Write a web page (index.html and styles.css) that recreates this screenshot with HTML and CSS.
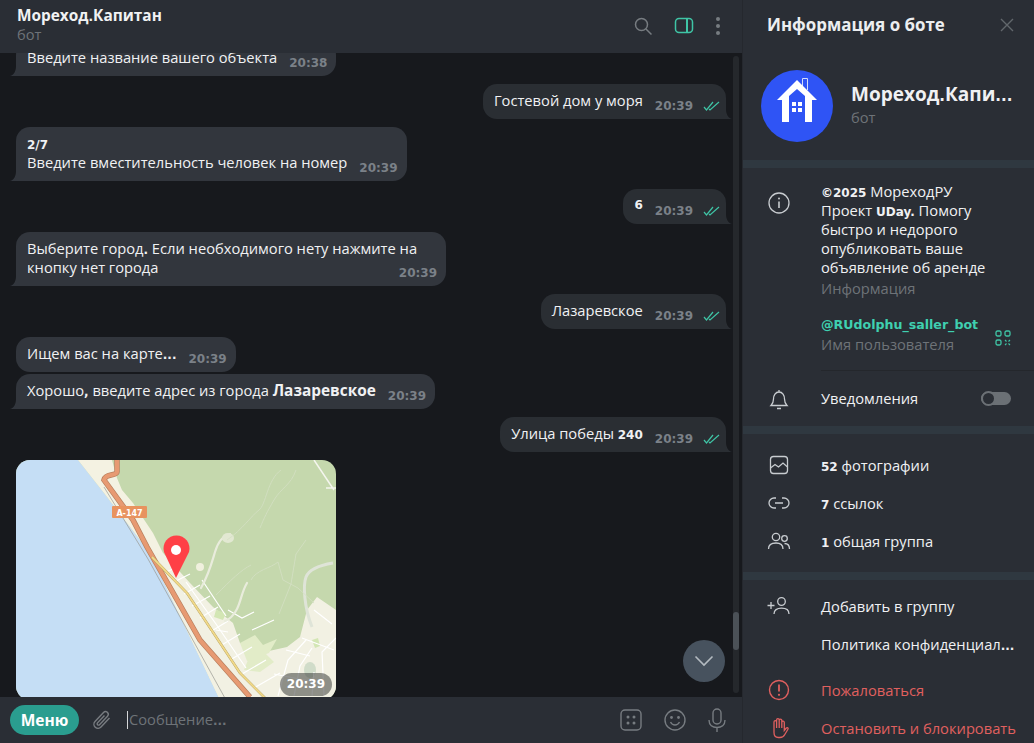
FILE: index.html
```html
<!DOCTYPE html>
<html lang="ru">
<head>
    <meta charset="UTF-8">
    <title>Мореход.Капитан</title>
    <link rel="stylesheet" href="styles.css">
</head>
<body>
<div class="app">
    <div class="chat">
        <div class="topbar">
            <div>
                <div class="chat-name">Мореход<b class="p">.</b>Капитан</div>
                <div class="chat-sub">бот</div>
            </div>
            <div class="top-icons">
                <svg width="20" height="20" viewBox="0 0 20 20" fill="none" stroke="#777c81" stroke-width="1.5"><circle cx="8.5" cy="8.5" r="6"/><path d="M13 13l5.5 5.5"/></svg>
                <svg width="20" height="20" viewBox="0 0 20 20" fill="none" stroke="#3fc5a6" stroke-width="1.5"><rect x="1.5" y="2.5" width="17" height="14" rx="3.5"/><path d="M13 2.5v14" stroke-width="2"/></svg>
                <svg width="6" height="20" viewBox="0 0 6 20" fill="#777c81"><circle cx="3" cy="3" r="2"/><circle cx="3" cy="10" r="2"/><circle cx="3" cy="17" r="2"/></svg>
            </div>
        </div>

        <div class="feed">
            <div class="messages">
                <div class="msg in tail">
                    <div class="line"><span>Введите название вашего объекта</span><span class="time">20:38</span></div>
                </div>
                <div class="msg out tail">
                    <div class="line"><span>Гостевой дом у моря</span><span class="time">20:39</span><svg class="ticks" viewBox="0 0 18 10" fill="none" stroke="#3fc5a6" stroke-width="1.2"><path d="M1 6l2.5 3L10 1M6 8l1 1 9-8"/></svg></div>
                </div>
                <div class="msg in tail">
                    <div class="num-line"><b class="num">2/7</b></div>
                    <div class="line"><span>Введите вместительность человек на номер</span><span class="time">20:39</span></div>
                </div>
                <div class="msg out tail">
                    <div class="line"><span class="num">6</span><span class="time">20:39</span><svg class="ticks" viewBox="0 0 18 10" fill="none" stroke="#3fc5a6" stroke-width="1.2"><path d="M1 6l2.5 3L10 1M6 8l1 1 9-8"/></svg></div>
                </div>
                <div class="msg in tail msg-wide">
                    <div>Выберите город<b class="p">.</b> Если необходимого нету нажмите на</div>
                    <div class="line split"><span>кнопку нет города</span><span class="time">20:39</span></div>
                </div>
                <div class="msg out tail">
                    <div class="line"><span>Лазаревское</span><span class="time">20:39</span><svg class="ticks" viewBox="0 0 18 10" fill="none" stroke="#3fc5a6" stroke-width="1.2"><path d="M1 6l2.5 3L10 1M6 8l1 1 9-8"/></svg></div>
                </div>
                <div class="msg in">
                    <div class="line"><span>Ищем вас на карте<b class="p">...</b></span><span class="time">20:39</span></div>
                </div>
                <div class="msg in tail close">
                    <div class="line"><span>Хорошо<b class="p">,</b> введите адрес из города <b class="strong">Лазаревское</b></span><span class="time">20:39</span></div>
                </div>
                <div class="msg out tail">
                    <div class="line"><span>Улица победы <b class="num">240</b></span><span class="time">20:39</span><svg class="ticks" viewBox="0 0 18 10" fill="none" stroke="#3fc5a6" stroke-width="1.2"><path d="M1 6l2.5 3L10 1M6 8l1 1 9-8"/></svg></div>
                </div>
                <div class="map">
                    <svg width="320" height="240" viewBox="0 0 320 240">
                        <rect width="320" height="240" fill="#c5d8ad"/>
                        <path d="M62 0L88 33 134 93 204 240H0V0Z" fill="#c5def5"/>
                        <path d="M62 0L88 33 134 93 204 240H224L174 140 147 93 137 73 117 43 106 30 101 18 96 0Z" fill="#f4f2e2"/>
                        <path d="M147 93L174 123 197 147 217 163 224 183 244 193 271 187 284 177 291 150 301 137 320 150V240H204L134 93Z" fill="#f2f1e3"/>
                        <path d="M224 183l15-8 8 10 14-6-8 14-22 8ZM232 200l18-6 8 8-14 10-16-2Z" fill="#e2ecc8"/>
                        <path d="M296 180l6-2 2 8-5 2ZM200 150l10 3-3 7-9-3Z" fill="#d3e6b4"/>
                        <ellipse cx="294" cy="210" rx="6" ry="8" fill="#d0dcc9"/>
                        <g fill="none" stroke="#fff" stroke-width="1.2">
                            <path d="M150 112l14-6M158 122l16-8M168 134l16-9M176 146l18-10M184 158l18-11M194 172l18-11M204 186l20-12M214 200l22-13M226 214l24-14M238 228l26-15"/>
                            <path d="M170 122l30 42 30 44M186 120l24 36M262 236l10-36 18-20M278 236l6-30 12-18M296 236l2-24M308 236l-2-44 14-14M270 190l24 6M258 214l40 8M286 178l32 12M298 150l18 14"/>
                            <path d="M200 170l12 2M212 150l14 8 12-6M236 170l22-10"/>
                        </g>
                        <g fill="none" stroke="#e9ecdc" stroke-width="2.2" stroke-linecap="round">
                            <path d="M214 74c-8 2-12 8-15 18s-6 22-14 36"/>
                            <path d="M231 123c-5 8-6 18-10 26s-8 10-12 12"/>
                        </g>
                        <path d="M317 103c-12 2-24 6-27 14s-2 30 6 50" fill="none" stroke="#dfe4d8" stroke-width="3"/>
                        <circle cx="184" cy="107" r="4" fill="#f0f0de"/>
                        <ellipse cx="212" cy="78" rx="6" ry="5" fill="#e2e8d2"/>
                        <g fill="none" stroke="#d4e0c4" stroke-width=".8">
                            <path d="M211 80c15-10 25-25 32-30s8-30 22-40M280 10c-5 15-15 18-22 30s-10 18-14 28M235 120c5-10 20-12 27-18l5 18 15 8 16 15M200 135c15-15 25-25 35-30M290 80l-10 14-5 30-12 30"/>
                        </g>
                        <path d="M298 0l20 30M310 28h10" fill="none" stroke="#f4f5ee" stroke-width="1.5"/>
                        <path d="M88 27l44 72 78 141" fill="none" stroke="#9a9a92" stroke-width=".7"/>
                        <path d="M101 0v12q0 2-6 3t-7 5l29 40 14 27 53 93 50 57" fill="none" stroke="#b9805f" stroke-width="5.5"/>
                        <path d="M101 0v12q0 2-6 3t-7 5l29 40 14 27 53 93 50 57" fill="none" stroke="#e79a72" stroke-width="4"/>
                        <path d="M136 97l35 36 53 80 27 27" fill="none" stroke="#b7a563" stroke-width="2.6"/>
                        <path d="M136 97l35 36 53 80 27 27" fill="none" stroke="#f1d98a" stroke-width="1.8"/>
                        <rect x="96" y="46" width="35" height="12" rx="1" fill="#e8935f"/>
                        <text x="113.500" y="55.500" class="road-label" text-anchor="middle">А-147</text>
                        <path d="M160 118L148 92a13 13 0 1 1 25 0Z" fill="#ff4046"/>
                        <circle cx="160" cy="90" r="5" fill="#fff"/>
                    </svg>
                    <span class="map-time">20:39</span>
                </div>
            </div>
            <div class="scroll-track"><div class="scroll-thumb"></div></div>
            <div class="down-btn">
                <svg width="20" height="12" viewBox="0 0 20 12" fill="none" stroke="#b4bbc1" stroke-width="1.6"><path d="M1.500 1.500L10 10l8.500-8.500"/></svg>
            </div>
        </div>

        <div class="composer">
            <div class="menu-btn">Меню</div>
            <svg class="clip" width="22" height="22" viewBox="0 0 20 22" fill="none" stroke="#787c81" stroke-width="1.4"><path d="M17.500 9l-8.500 9a4 4 0 0 1-6-5.500L11.500 3.500a2.700 2.700 0 0 1 4 3.700l-8 8.500a1.300 1.300 0 0 1-2-1.800l7-7.500"/></svg>
            <div class="input"><i class="caret"></i><span>Сообщение<b class="p">...</b></span></div>
            <div class="input-icons">
                <svg width="22" height="22" viewBox="0 0 22 22" fill="none" stroke="#777c81" stroke-width="1.4"><rect x="1" y="1" width="20" height="20" rx="4"/><g fill="#777c81" stroke="none"><circle cx="8" cy="8" r="1.500"/><circle cx="14" cy="8" r="1.500"/><circle cx="8" cy="14" r="1.500"/><circle cx="14" cy="14" r="1.500"/></g></svg>
                <svg width="22" height="22" viewBox="0 0 22 22" fill="none" stroke="#777c81" stroke-width="1.4"><circle cx="11" cy="11" r="10"/><path d="M6.500 13c1 2 2.700 3 4.500 3s3.500-1 4.500-3"/><g fill="#777c81" stroke="none"><circle cx="7.500" cy="8.500" r="1.400"/><circle cx="14.500" cy="8.500" r="1.400"/></g></svg>
                <svg width="18" height="24" viewBox="0 0 18 24" fill="none" stroke="#777c81" stroke-width="1.4"><rect x="5" y="1" width="8" height="15" rx="4"/><path d="M1 12c0 5 3.500 7.500 8 7.500s8-2.500 8-7.500M9 19.500V24"/></svg>
            </div>
        </div>
    </div>

    <div class="panel">
        <div class="panel-head">
            <span>Информация о боте</span>
            <svg width="14" height="14" viewBox="0 0 14 14" stroke="#62676c" stroke-width="1.4"><path d="M1 1l12 12M13 1L1 13"/></svg>
        </div>
        <div class="profile">
            <svg class="avatar" width="72" height="72" viewBox="0 0 72 72">
                <circle cx="36" cy="36" r="36" fill="#2f54f5"/>
                <path d="M41.500 20V8.500h5V20" fill="none" stroke="#d5dcfb"/>
                <path d="M36 10L56 30H51V52H44V26L36 19 28 26V52H21V30H16Z" fill="#fff"/>
                <g fill="#fff"><rect x="31" y="32" width="4" height="4"/><rect x="37" y="32" width="4" height="4"/><rect x="31" y="38" width="4" height="4"/><rect x="37" y="38" width="4" height="4"/></g>
            </svg>
            <div>
                <div class="profile-name">Мореход<b class="p">.</b>Капи<b class="p">...</b></div>
                <div class="muted">бот</div>
            </div>
        </div>
        <div class="divider"></div>

        <div class="section info">
            <div class="info-row">
                <svg class="ic" width="24" height="24" viewBox="0 0 24 24" fill="none" stroke="#c8ccd0" stroke-width="1.3"><circle cx="12" cy="12" r="10"/><path d="M12 10.500v6.500" stroke-width="1.600"/><circle cx="12" cy="7.500" r="1" fill="#c8ccd0" stroke="none"/></svg>
                <div>
                    <div class="about"><b class="num">©2025</b> МореходРУ Проект <b class="num">UDay.</b> Помогу быстро и недорого опубликовать ваше объявление об аренде</div>
                    <div class="muted about-label">Информация</div>
                </div>
            </div>
            <div class="user-row">
                <div>
                    <div class="username">@RUdolphu_saller_bot</div>
                    <div class="muted">Имя пользователя</div>
                </div>
                <svg width="16" height="16" viewBox="0 0 16 16" fill="none" stroke="#3fc5a6" stroke-width="1.3"><rect x="1" y="1" width="5" height="5" rx="1.500"/><rect x="10" y="1" width="5" height="5" rx="1.500"/><rect x="1" y="10" width="5" height="5" rx="1.500"/><path d="M10 10l1.500 1.500M15 10l-1.500 1.500M10 15l1.500-1.500M15 15l-1.500-1.500" stroke-width="1.100"/></svg>
            </div>
            <div class="hr"></div>
            <div class="row notify">
                <svg class="ic" width="24" height="24" viewBox="0 0 24 24" fill="none" stroke="#c8ccd0" stroke-width="1.3"><path d="M4 18.500c1.500-1.500 2.500-3 2.500-6.500S8.500 5 12 5s5.500 3.500 5.500 7 1 5 2.500 6.500ZM12 3v2M10 21.500h4"/></svg>
                <span>Уведомления</span>
                <div class="toggle"><i></i></div>
            </div>
        </div>
        <div class="divider"></div>

        <div class="section stats">
            <div class="row">
                <svg class="ic" width="24" height="24" viewBox="0 0 24 24" fill="none" stroke="#c8ccd0" stroke-width="1.3"><rect x="3.500" y="3.500" width="17" height="17" rx="3"/><path d="M3.500 15l4.500-3.500 3.500 2.500 4.500-4 4.500 4"/></svg>
                <span><b class="num">52</b> фотографии</span>
            </div>
            <div class="row">
                <svg class="ic" width="24" height="24" viewBox="0 0 24 24" fill="none" stroke="#c8ccd0" stroke-width="1.3"><path d="M9 7H7a5 5 0 0 0 0 10h2M15 7h2a5 5 0 0 1 0 10h-2M8 12h8"/></svg>
                <span><b class="num">7</b> ссылок</span>
            </div>
            <div class="row">
                <svg class="ic" width="24" height="24" viewBox="0 0 24 24" fill="none" stroke="#c8ccd0" stroke-width="1.3"><circle cx="9" cy="8" r="3.700"/><path d="M1.500 20c0-4 3-6 7.500-6s7 2 7 6"/><circle cx="17.500" cy="9.500" r="2.800"/><path d="M17.500 14.500c3 0 5 1.800 5 5.500"/></svg>
                <span><b class="num">1</b> общая группа</span>
            </div>
        </div>
        <div class="divider"></div>

        <div class="section actions">
            <div class="row">
                <svg class="ic" width="24" height="24" viewBox="0 0 24 24" fill="none" stroke="#c8ccd0" stroke-width="1.3"><circle cx="14.500" cy="7.500" r="3.800"/><path d="M7 20c0-4 3-5.800 7.500-5.800S22 16 22 20M0.500 11.500h7M4 8v7"/></svg>
                <span>Добавить в группу</span>
            </div>
            <div class="row">
                <span class="ic"></span>
                <span>Политика конфиденциал<b class="p">...</b></span>
            </div>
            <div class="row red first-red">
                <svg class="ic" width="24" height="24" viewBox="0 0 24 24" fill="none" stroke="#e0605f" stroke-width="1.4"><circle cx="12" cy="12" r="9.500"/><path d="M12 6.500v7" stroke-width="1.800"/><circle cx="12" cy="16.800" r="1.100" fill="#e0605f" stroke="none"/></svg>
                <span>Пожаловаться</span>
            </div>
            <div class="row red">
                <svg class="ic" width="24" height="24" viewBox="0 0 24 24" fill="none" stroke="#e0605f" stroke-width="1.3"><path d="M7 12.500V6a1.300 1.300 0 0 1 2.600 0V4a1.300 1.300 0 0 1 2.600 0v.500a1.300 1.300 0 0 1 2.600 0V6a1.300 1.300 0 0 1 2.500.500v8l2-2.500c1-1 2.500 0 1.500 1.500l-3 5c-1 2-2.500 3-5 3h-1.500c-3 0-4.300-2-4.300-5ZM9.600 6v6M12.200 4.500V12M14.800 6v6"/></svg>
                <span>Остановить и блокировать</span>
            </div>
        </div>
    </div>
</div>
</body>
</html>
```

FILE: styles.css
```css
* {
    box-sizing: border-box;
}

html,
body {
    margin: 0;
    height: 100%;
    overflow: hidden;
}

body {
    background: #17191d;
    color: #f0f1f3;
    font-family: "Open Sans", "Noto Sans", sans-serif;
    font-size: 14.7px;
    line-height: 19px;
}

b {
    font-weight: 700;
}

/* punctuation and digits in the reference come from a wide bold fallback */
.p,
.num {
    font-family: "DejaVu Sans", sans-serif;
    font-weight: 700;
    font-size: 12px;
    line-height: 1;
}

.num-line {
    height: 19px;
}

.strong {
    font-size: 15.4px;
    line-height: 1;
}

.app {
    display: flex;
    height: 743px;
}

.chat {
    width: 742px;
    display: flex;
    flex-direction: column;
}

.topbar {
    height: 53px;
    background: #2a2e35;
    display: flex;
    justify-content: space-between;
    align-items: center;
    padding: 0 21px 0 17px;
    position: relative;
    z-index: 1;
}

.chat-name {
    font-weight: 700;
    font-size: 15.4px;
    line-height: 19px;
    color: #f1f2f3;
    margin-top: -4px;
}

.chat-sub {
    color: #6e7378;
    line-height: 18px;
}

.top-icons {
    display: flex;
    align-items: center;
    gap: 21px;
    margin-top: -1px;
}

.feed {
    flex: 1;
    position: relative;
    overflow: hidden;
}

.messages {
    display: flex;
    flex-direction: column;
    gap: 8px;
    margin-top: -12px;
    padding: 0 16px;
}

.msg {
    position: relative;
    padding: 7px 9px 9px 11px;
    border-radius: 14px;
    background: #32363d;
    align-self: flex-start;
}

.msg.out {
    background: #2a2e33;
    align-self: flex-end;
    padding-right: 5px;
}

.msg.close {
    margin-top: -6px;
}

.msg-wide {
    width: 430px;
}

.msg.in.tail {
    border-bottom-left-radius: 0;
}

.msg.out.tail {
    border-bottom-right-radius: 0;
}

.msg.tail::after {
    content: "";
    position: absolute;
    bottom: 0;
    width: 6px;
    height: 10px;
    background: inherit;
}

.msg.in.tail::after {
    left: -6px;
    clip-path: path("M6 0C6 5 4 9 0 10H6Z");
}

.msg.out.tail::after {
    right: -6px;
    clip-path: path("M0 0C0 5 2 9 6 10H0Z");
}

.line {
    display: flex;
    align-items: flex-end;
    min-height: 19px;
}

.line > .num {
    line-height: 19px;
}

.line.split {
    justify-content: space-between;
}

.time {
    font-family: "DejaVu Sans", sans-serif;
    font-weight: 700;
    font-size: 12px;
    line-height: 14px;
    color: #7b8188;
    margin-left: 12px;
    transform: translateY(3px);
}

.ticks {
    width: 18px;
    height: 10px;
    margin-left: 10px;
    transform: translateY(1px);
}

.map {
    position: relative;
    width: 320px;
    height: 240px;
    border-radius: 14px;
    overflow: hidden;
    flex: none;
}

.map svg {
    display: block;
}

.road-label {
    font-family: "DejaVu Sans", sans-serif;
    font-size: 8px;
    font-weight: 700;
    fill: #fff;
}

.map-time {
    position: absolute;
    right: 4px;
    top: 213px;
    padding: 2px 7px;
    border-radius: 12px;
    background: rgba(60, 62, 60, 0.55);
    color: #fff;
    font-family: "DejaVu Sans", sans-serif;
    font-weight: 700;
    font-size: 12px;
}

.scroll-track {
    position: absolute;
    right: 3px;
    top: 3px;
    bottom: 4px;
    width: 6px;
    border-radius: 3px;
    background: #25282c;
}

.scroll-thumb {
    position: absolute;
    top: 556px;
    width: 6px;
    height: 38px;
    border-radius: 3px;
    background: #4b5157;
}

.down-btn {
    position: absolute;
    left: 683px;
    top: 587px;
    width: 42px;
    height: 42px;
    border-radius: 50%;
    background: #47525e;
    display: flex;
    align-items: center;
    justify-content: center;
}

.composer {
    height: 46px;
    background: #2a2e35;
    display: flex;
    align-items: center;
    padding: 0 16px 0 10px;
    position: relative;
}

.menu-btn {
    width: 69px;
    height: 30px;
    border-radius: 15px;
    background: #2a9d8f;
    color: #fff;
    font-weight: 700;
    font-size: 15.5px;
    line-height: 30px;
    text-align: center;
}

.clip {
    margin-left: 12px;
}

.input {
    flex: 1;
    margin-left: 14px;
    color: #6e7378;
    display: flex;
    align-items: center;
}

.input span {
    margin-top: -2px;
}

.caret {
    width: 1px;
    height: 18px;
    margin-right: 1px;
    background: #d5d7d9;
}

.input-icons {
    display: flex;
    align-items: center;
    gap: 22px;
}

.panel {
    width: 292px;
    background: #2a2e35;
    border-left: 1px solid #25282e;
    overflow: hidden;
}

.panel-head {
    height: 49px;
    display: flex;
    align-items: center;
    justify-content: space-between;
    padding: 0 20px 0 24px;
    font-weight: 700;
    font-size: 16.9px;
    color: #eceef0;
}

.profile {
    height: 111px;
    padding: 21px 0 0 18px;
    display: flex;
    gap: 18px;
}

.avatar {
    flex: none;
}

.profile-name {
    margin-top: 12px;
    margin-bottom: 2px;
    font-weight: 700;
    font-size: 19px;
    line-height: 24px;
}

.profile-name .p {
    font-size: 15px;
}

.muted {
    color: #6e7378;
}

.divider {
    height: 8px;
    background: #2f3840;
}

.info {
    padding-top: 14px;
}

.info-row {
    display: flex;
    padding-left: 24px;
}

.info-row .ic {
    margin-top: 9px;
}

.about {
    width: 172px;
}

.about-label {
    margin-top: 2px;
}

.ic {
    width: 24px;
    height: 24px;
    margin-right: 30px;
    flex: none;
}

.user-row {
    display: flex;
    align-items: center;
    justify-content: space-between;
    padding: 0 23px 0 78px;
    margin-top: 17px;
}

.user-row svg {
    margin-top: 7px;
}

.username {
    font-family: "DejaVu Sans", sans-serif;
    font-weight: 700;
    font-size: 12.6px;
    color: #3fd0b0;
    margin-bottom: 1px;
}

.hr {
    height: 1px;
    margin: 16px 0 0 78px;
    background: #24272c;
}

.row {
    height: 38px;
    padding-left: 24px;
    display: flex;
    align-items: center;
}

.notify {
    height: 55px;
    padding-right: 23px;
}

.toggle {
    margin-left: auto;
    width: 30px;
    height: 13px;
    border-radius: 7px;
    background: #6b7075;
    position: relative;
}

.toggle i {
    position: absolute;
    left: 0;
    top: -1px;
    width: 15px;
    height: 15px;
    border-radius: 50%;
    border: 2px solid #6b7075;
    background: #2a2e35;
}

.stats {
    padding: 12px 0;
}

.actions {
    padding-top: 7px;
}

.first-red {
    margin-top: 8px;
}

.red {
    color: #e0605f;
}
```
